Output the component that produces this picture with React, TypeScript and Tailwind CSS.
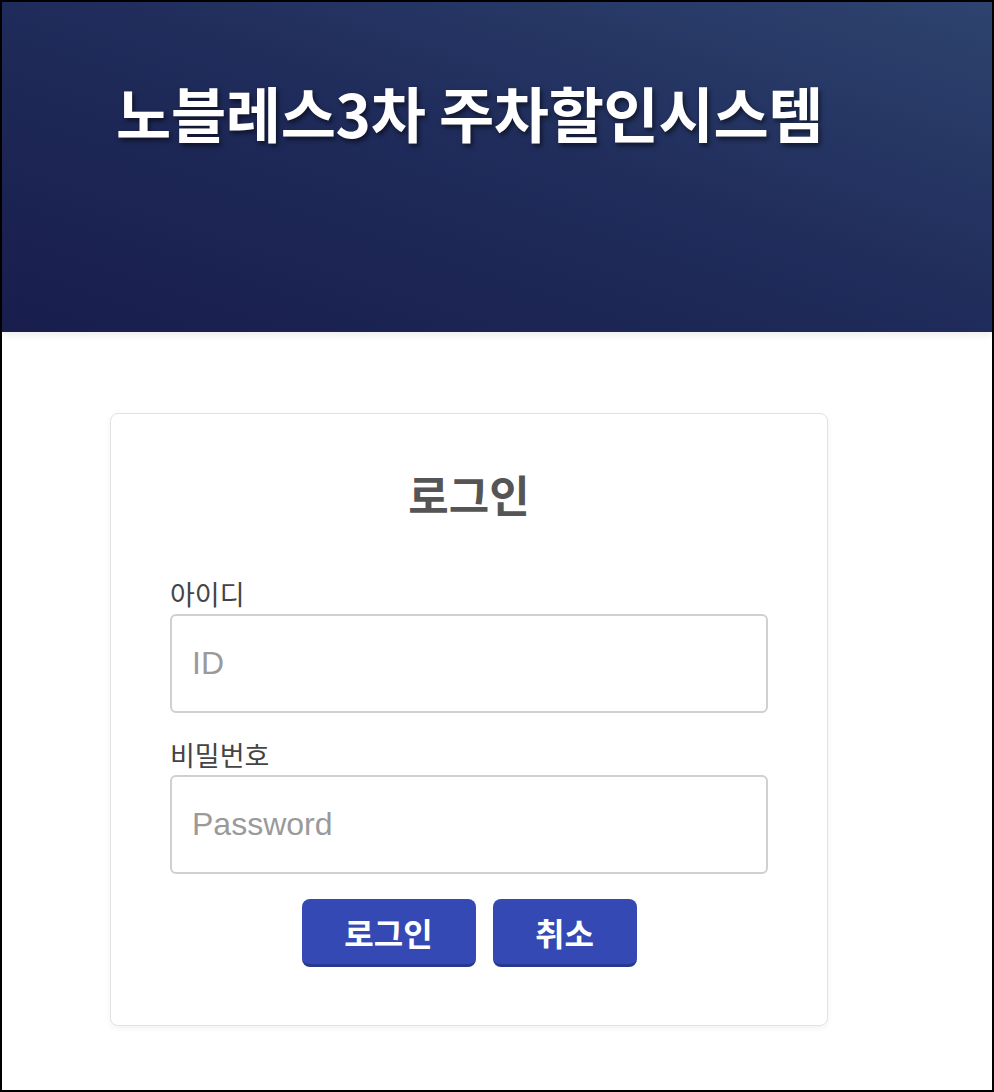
export default function App() {
  return (
    <div className="h-[1092px] w-[994px] overflow-hidden border-2 border-black bg-white font-['Noto_Sans_CJK_KR',sans-serif]">
      <header className="h-[330px] bg-gradient-to-tr from-[#181d4c] via-[#1f2b5a] to-[#2e436f] pl-[114px] pt-[74px] shadow-[0_3px_8px_rgba(0,0,0,0.08)]">
        <h1 className="text-[60px] font-bold leading-[1.2] tracking-[-0.3px] text-white [text-shadow:2px_3px_5px_rgba(0,0,0,0.55)]">
          노블레스3차 주차할인시스템
        </h1>
      </header>

      <div className="ml-[108px] mt-[81px] w-[718px] rounded-lg border border-[#e2e2e2] px-[59px] pb-[58px] pt-[54px] shadow-[0_2px_6px_rgba(0,0,0,0.06)]">
        <h2 className="text-center text-[44px] font-bold leading-[52px] text-[#555]">로그인</h2>

        <form className="mt-[58px] flex flex-col">
          <label className="text-[27px] leading-[32px] text-[#444]" htmlFor="uid">
            아이디
          </label>
          <input
            id="uid"
            placeholder="ID"
            className="mt-1 h-[99px] w-full rounded-md border-2 border-[#d0d0d0] px-5 font-['Liberation_Sans',sans-serif] text-[32px] text-[#333] outline-none placeholder:text-[#9a9a9a]"
          />

          <label className="mt-[26px] text-[27px] leading-[32px] text-[#444]" htmlFor="upw">
            비밀번호
          </label>
          <input
            id="upw"
            type="password"
            placeholder="Password"
            className="mt-1 h-[99px] w-full rounded-md border-2 border-[#d0d0d0] px-5 font-['Liberation_Sans',sans-serif] text-[32px] text-[#333] outline-none placeholder:text-[#9a9a9a]"
          />

          <div className="mt-[25px] flex justify-center gap-[17px]">
            <button
              type="button"
              className="h-[68px] w-[174px] rounded-lg border-b-[3px] border-[#27388f] bg-[#3549b4] text-[32px] font-bold text-white"
            >
              로그인
            </button>
            <button
              type="button"
              className="h-[68px] w-[144px] rounded-lg border-b-[3px] border-[#27388f] bg-[#3549b4] text-[32px] font-bold text-white"
            >
              취소
            </button>
          </div>
        </form>
      </div>
    </div>
  );
}
